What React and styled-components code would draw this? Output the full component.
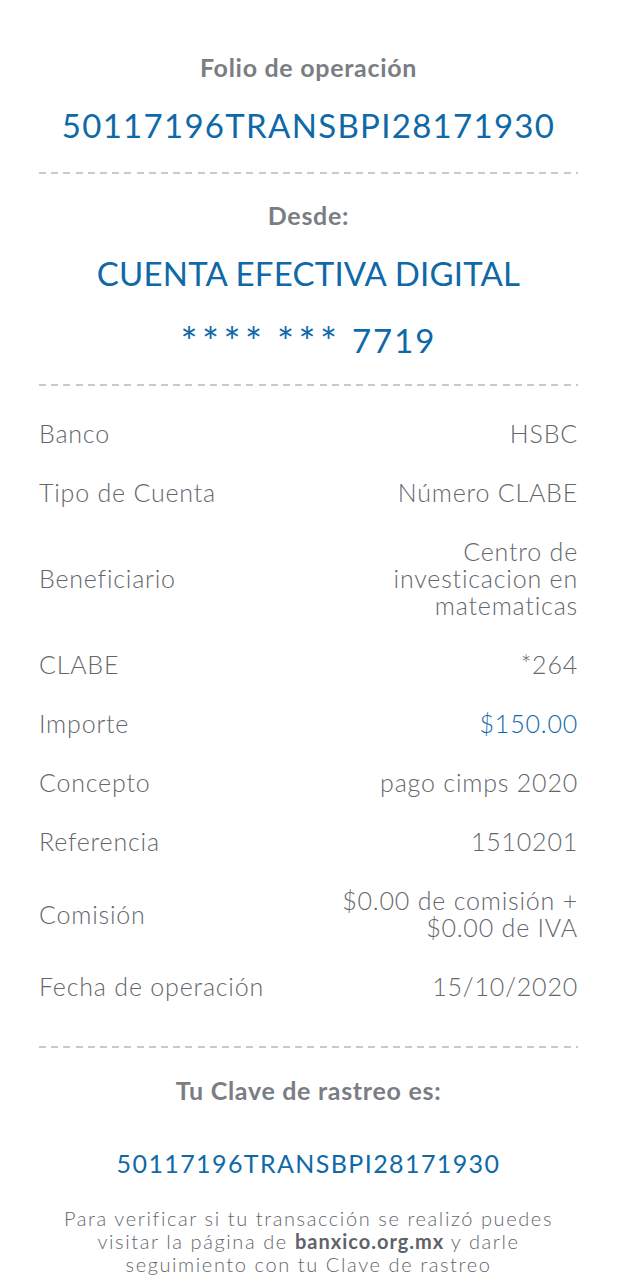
import React from 'react';
import styled, { createGlobalStyle } from 'styled-components';

const GlobalStyle = createGlobalStyle`
  body {
    margin: 0;
    background: #ffffff;
    font-family: Lato, "Liberation Sans", sans-serif;
  }
`;

const rows = [
  { label: 'Banco', value: ['HSBC'] },
  { label: 'Tipo de Cuenta', value: ['Número CLABE'] },
  { label: 'Beneficiario', value: ['Centro de', 'investicacion en', 'matematicas'] },
  { label: 'CLABE', value: ['*264'] },
  { label: 'Importe', value: ['$150.00'], accent: true },
  { label: 'Concepto', value: ['pago cimps 2020'] },
  { label: 'Referencia', value: ['1510201'] },
  { label: 'Comisión', value: ['$0.00 de comisión +', '$0.00 de IVA'] },
  { label: 'Fecha de operación', value: ['15/10/2020'] },
];

const App = () => (
  <>
    <GlobalStyle />
    <Receipt>
      <Title $top={52}>Folio de operación</Title>
      <BigBlue $top={23} $spacing={1.3}>50117196TRANSBPI28171930</BigBlue>
      <Dashes $top={27} />

      <Title $top={26}>Desde:</Title>
      <BigBlue $top={23} $spacing={0.2}>CUENTA EFECTIVA DIGITAL</BigBlue>
      <BigBlue $top={27} $spacing={2}>
        <Masked>****</Masked> <Masked>***</Masked> 7719
      </BigBlue>
      <Dashes $top={24} />

      <Details>
        {rows.map((row) => (
          <Row key={row.label}>
            <Label>{row.label}</Label>
            <Value $accent={row.accent}>
              {row.value.map((line) => (
                <Line key={line}>{line}</Line>
              ))}
            </Value>
          </Row>
        ))}
      </Details>
      <Dashes $top={30} />

      <Title $top={27}>Tu Clave de rastreo es:</Title>
      <Tracking>50117196TRANSBPI28171930</Tracking>
      <Note>
        Para verificar si tu transacción se realizó puedes
        <br />
        visitar la página de <strong>banxico.org.mx</strong> y darle
        <br />
        seguimiento con tu Clave de rastreo
      </Note>
    </Receipt>
  </>
);

const Receipt = styled.main`
  display: flex;
  flex-direction: column;
  padding: 0 40px 20px 39px;
`;

const Title = styled.h2`
  margin: ${(p) => p.$top}px 0 0;
  text-align: center;
  font-size: 25px;
  line-height: 30px;
  letter-spacing: 0.7px;
  font-weight: 700;
  color: #7a7e84;
`;

const BigBlue = styled.div`
  margin-top: ${(p) => p.$top}px;
  text-align: center;
  font-size: 33px;
  line-height: 40px;
  letter-spacing: ${(p) => p.$spacing}px;
  font-weight: 400;
  color: #0f69a8;
`;

const Masked = styled.span`
  font-size: 40px;
  line-height: 0;
  letter-spacing: 4.5px;
  vertical-align: -4px;
`;

const Dashes = styled.div`
  margin-top: ${(p) => p.$top}px;
  height: 2px;
  background: repeating-linear-gradient(
    to right,
    #c7cacd 0,
    #c7cacd 7px,
    transparent 7px,
    transparent 12.2px
  );
`;

const Details = styled.section`
  display: flex;
  flex-direction: column;
  margin-top: 18px;
`;

const Row = styled.div`
  display: flex;
  justify-content: space-between;
  align-items: center;
  padding: 16px 0;
  font-size: 25px;
  line-height: 27px;
  letter-spacing: 0.8px;
  font-weight: 300;
  color: #63676d;
`;

const Label = styled.span``;

const Value = styled.div`
  display: flex;
  flex-direction: column;
  align-items: flex-end;
  text-align: right;
  color: ${(p) => (p.$accent ? '#0f69a8' : '#63676d')};
`;

const Line = styled.span`
  display: block;
  height: 27px;
`;

const Tracking = styled.div`
  margin-top: 42px;
  text-align: center;
  font-size: 25px;
  line-height: 32px;
  letter-spacing: 1.4px;
  color: #0f69a8;
`;

const Note = styled.p`
  margin: 28px 0 0;
  text-align: center;
  font-size: 20px;
  line-height: 23px;
  letter-spacing: 1.6px;
  font-weight: 300;
  color: #63676d;

  strong {
    font-weight: 700;
    color: #5f6369;
    letter-spacing: 1px;
  }
`;

export default App;
